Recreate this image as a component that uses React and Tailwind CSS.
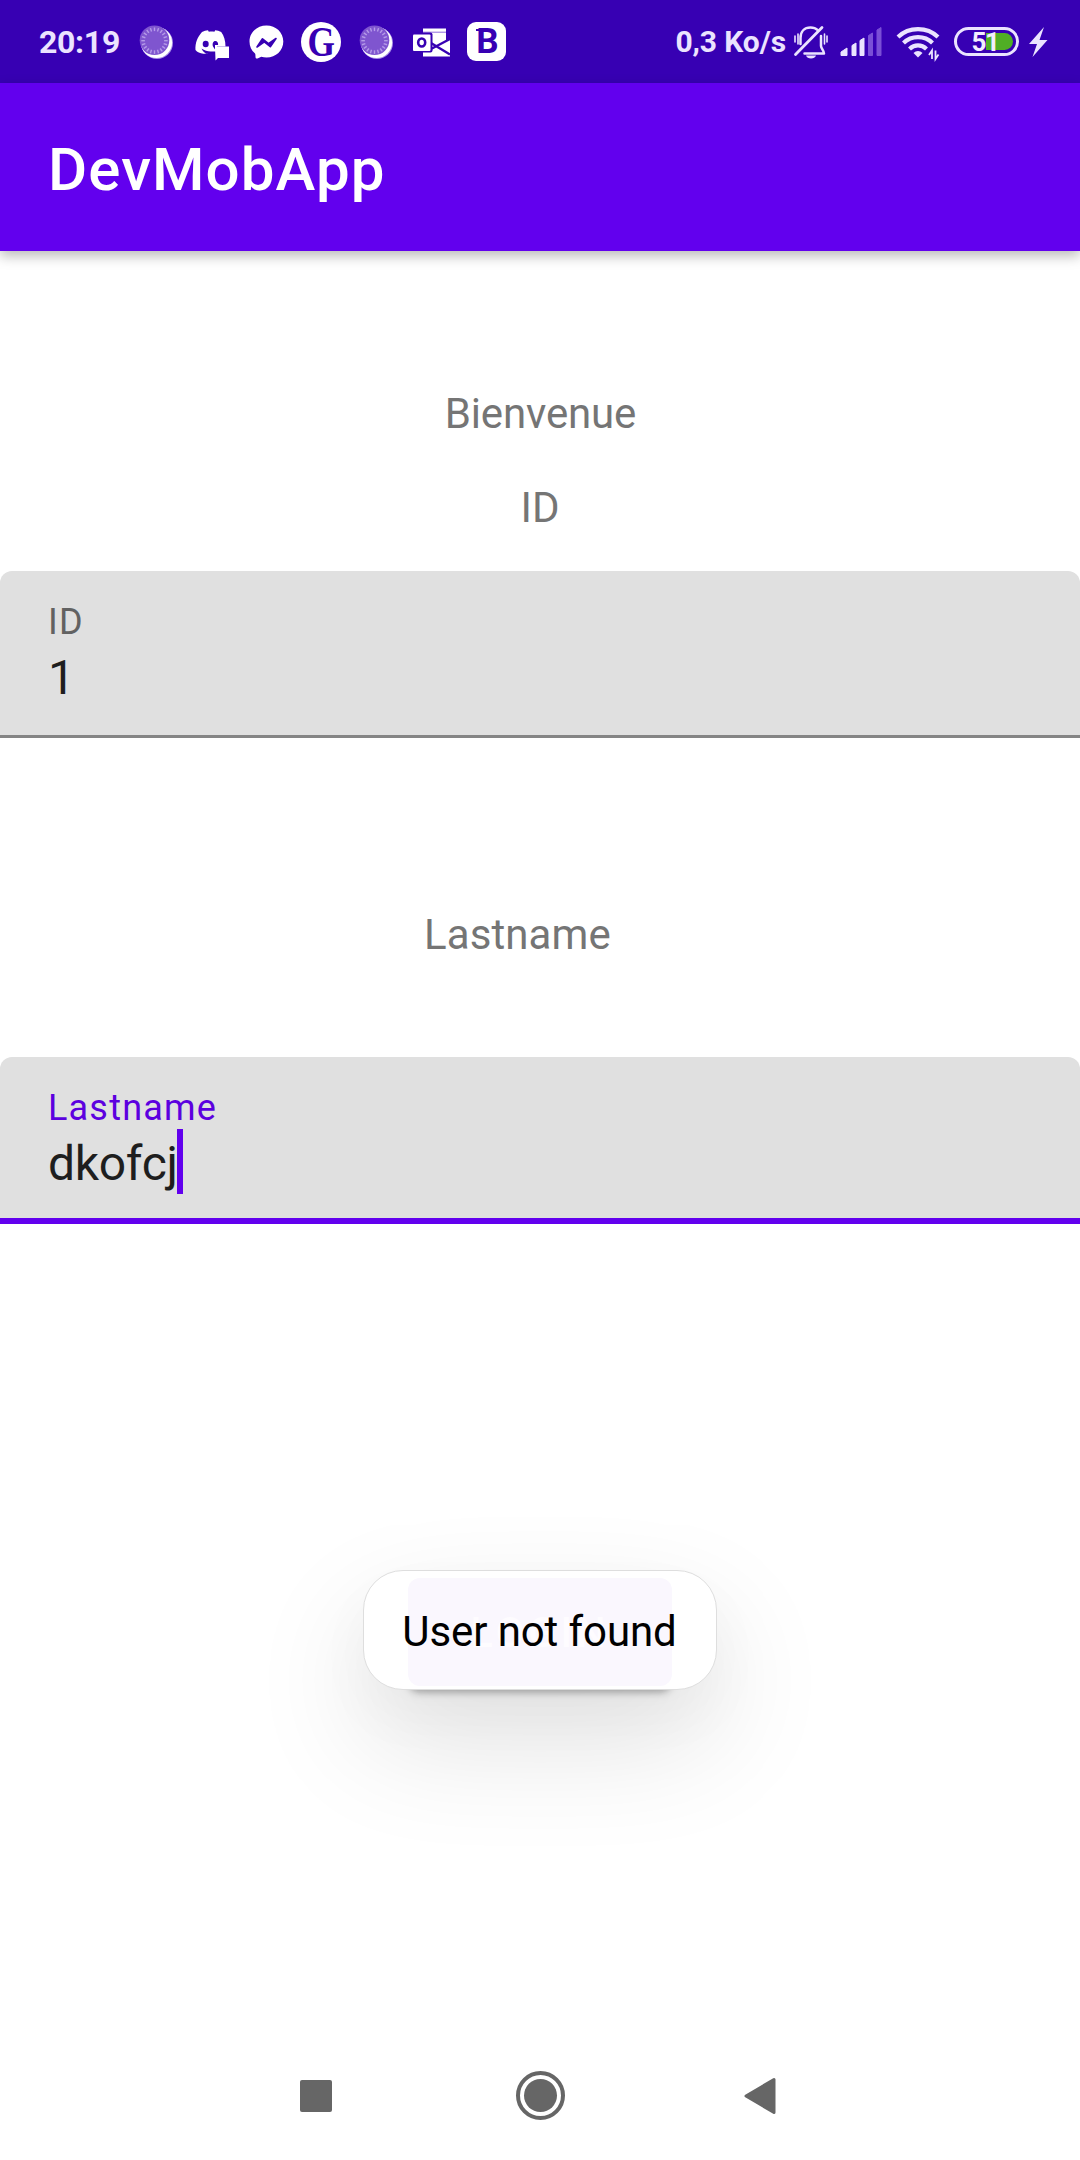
import React from "react";

const TINT = "#ebe3ff";

function Icon({ children, w = 40, h = 40, className = "" }) {
  return (
    <svg width={w} height={h} viewBox={`0 0 ${w} ${h}`} fill="none" className={`block shrink-0 ${className}`}>
      {children}
    </svg>
  );
}

function MoonIcon() {
  const rays = Array.from({ length: 20 }, (_, i) => i * 18);
  return (
    <Icon>
      <circle cx="21" cy="21" r="16" fill="#a68be6" />
      <circle cx="20.5" cy="20.5" r="15.6" fill="#fff" />
      <circle cx="18.5" cy="18.2" r="14.8" fill="#7f55cf" />
      {rays.map((a) => (
        <path key={a} d="M18.5 5.5v3.6" stroke="#b59be8" strokeWidth="1.4" transform={`rotate(${a} 18.5 18.7)`} />
      ))}
    </Icon>
  );
}

function DiscordIcon() {
  return (
    <Icon>
      <path
        d="M11 10c2-1 4-1.500 6-1.700l.8 1.400c2-.3 3.600-.3 5.600 0l.8-1.400c2 .2 4 .7 6 1.700 2.800 4 4.300 8.600 4.300 14.500H26v7.500c-1.500.2-8 .2-9.500-.1L15 30l-1.500-.5c2.500 2 3.500 1.800-1.200 2.300C9 31.500 6.200 30 4.500 28c-.5-7 2-13 6.500-18Z"
        fill="#fff"
      />
      <path d="M10.500 26.500c3 2 6 3 9 3H25V35H15l1.500-3.200c-2.500-.6-4.500-2-6-5.300Z" fill="#3700b3" />
      <ellipse cx="14.700" cy="22" rx="3" ry="3.200" fill="#3700b3" />
      <path d="M22 24.500c-1-3 .2-5.600 2.300-5.600 2 0 3.100 2 2.800 4.100H24v4.500Z" fill="#3700b3" />
      <path d="M24 24.500h14V36H27l-2.500 2.500Z" fill="#fff" />
    </Icon>
  );
}

function MessengerIcon() {
  return (
    <Icon>
      <path
        d="M20.500 3.500C11 3.500 3.500 10.300 3.500 19.500c0 4.800 2 9 5.300 11.800.6.500.6 1 .7 3.700.1 1.400 1 1.800 2 1.400l3.800-1.700c1.600.5 3.300.8 5.200.8 9.500 0 16.800-6.900 16.800-16S30 3.500 20.500 3.500Z"
        fill="#fff"
      />
      <path d="m11 25 5.500-8.200 6 4.900 7.500-5.200-5.700 8.200-6-4.900Z" fill="#3700b3" stroke="#3700b3" strokeWidth="1.600" strokeLinejoin="round" />
    </Icon>
  );
}

function GuardianIcon() {
  return (
    <div className="flex h-10 w-10 shrink-0 items-center justify-center rounded-full bg-white">
      <span className="block origin-center scale-x-[0.84] font-['Liberation_Serif',serif] text-[42px] leading-[40px] font-bold text-[#3700b3]">
        G
      </span>
    </div>
  );
}

function OutlookIcon() {
  return (
    <Icon>
      <path d="M12 6.500h23v13L39 17.500v17H12Z" fill="#fff" />
      <path d="M12 10.200h23" stroke="#8f6bdb" strokeWidth="1" />
      <path d="M20 21 39 32.500M39 17 20 27" stroke="#3700b3" strokeWidth="2.400" />
      <path d="M35 5v13l5-2.500V5Z" fill="#3700b3" />
      <rect x="1" y="10.500" width="20.500" height="20" rx="2" fill="#3700b3" />
      <rect x="2" y="12.500" width="17.500" height="16.500" rx="1" fill="#fff" />
      <ellipse cx="10.700" cy="20.500" rx="3.500" ry="4" stroke="#3700b3" strokeWidth="2.600" />
    </Icon>
  );
}

function BookingIcon() {
  return (
    <div className="relative ml-px flex h-[39px] w-[39px] shrink-0 items-center justify-center rounded-[9px] bg-white">
      <span className="absolute top-[7px] left-[9px] h-[2px] w-[4px] bg-[#3700b3]" />
      <span className="ml-[2px] text-[35px] leading-[39px] font-bold text-[#3700b3]">B</span>
    </div>
  );
}

function MutedBellIcon() {
  return (
    <Icon w={36} h={40}>
      <g stroke={TINT} strokeWidth="2.500" strokeLinecap="round">
        <path d="M7.500 22V16C7.500 9.500 11.500 5.500 17.500 5.500c3 0 5.500 1 7.300 2.700M28 14v10c0 2.500 3 4.500 3 7.500H11.500" strokeLinejoin="round" />
        <path d="M2.500 32.500 29 5.500" strokeWidth="2.800" />
        <path d="M2 14v6M34 14v6M5 12v10M31.500 12v10" strokeWidth="1.600" />
      </g>
      <path d="M13 33.500h10c-1 4-9 4-10 0Z" fill={TINT} />
    </Icon>
  );
}

function SignalIcon() {
  return (
    <Icon w={42} h={40} className="ml-[11px]">
      <path d="M1 33.500v-3.500l6-4v7.500ZM12 33.500V23.500l4-2.500v12.500ZM20 33.500V18.500l4-2.500v17.500Z" fill={TINT} stroke={TINT} strokeLinejoin="round" />
      <path d="M28.500 33.500V13.500l4-2.500v22.500ZM37 33.500V8l4-2.500v28Z" fill="#7a4fd6" stroke="#7a4fd6" strokeLinejoin="round" />
    </Icon>
  );
}

function WifiIcon() {
  return (
    <Icon w={44} h={40} className="ml-[14px]">
      <g stroke={TINT} strokeWidth="4.200">
        <path d="M2 15c11-10.500 29-10.500 40 0" />
        <path d="M7.500 21c8-7.800 21-7.800 29 0" />
        <path d="M13.500 27c5-4.800 12-4.800 17 0" />
      </g>
      <path d="M17.500 31c2.500-2.700 6.500-2.700 9 0L22 35.500Z" fill={TINT} />
      <path d="M36 37V28.500l-3 4.500M39.500 28.500V37l3-4.500" stroke={TINT} strokeWidth="1.800" />
    </Icon>
  );
}

function Battery() {
  return (
    <div className="relative ml-[14px] h-[29px] w-[65px] shrink-0 overflow-hidden rounded-full border-[3px] border-[#ebe3ff] p-[3px]">
      <div className="ml-auto h-full w-[27px] rounded-r-full bg-[#50ae25]" />
      <span className="absolute inset-0 flex items-center justify-center pr-[3px] text-[26px] leading-none font-bold tracking-[-1.5px] text-[#f3edff]">
        51
      </span>
    </div>
  );
}

function StatusBar() {
  return (
    <div className="flex h-[83px] items-center justify-between bg-[#3700b3] pr-[32px] pl-[39px]">
      <div className="flex items-center">
        <span className="w-[97px] text-[32px] leading-[40px] font-bold tracking-[-0.3px] text-[#ebe3ff]">20:19</span>
        <div className="flex items-center gap-[15px]">
          <MoonIcon />
          <DiscordIcon />
          <MessengerIcon />
          <GuardianIcon />
          <MoonIcon />
          <OutlookIcon />
          <BookingIcon />
        </div>
      </div>
      <div className="flex items-center">
        <span className="mr-[7px] text-[30px] leading-[40px] font-bold tracking-[-0.1px] whitespace-nowrap text-[#ebe3ff]">
          0,3 Ko/s
        </span>
        <MutedBellIcon />
        <SignalIcon />
        <WifiIcon />
        <Battery />
        <Icon w={20} h={32} className="ml-[9px]">
          <path d="M16 1 1 18h8L4.500 31 19.500 14h-8Z" fill={TINT} />
        </Icon>
      </div>
    </div>
  );
}

function Field({ label, value, focused }) {
  return (
    <div
      className={`h-[167px] rounded-t-[12px] bg-[#e0e0e0] px-12 pt-[29px] ${
        focused ? "border-b-6 border-[#6200ee]" : "border-b-3 border-[#858585]"
      }`}
    >
      <div className={`text-[36px] leading-[44px] tracking-[1.2px] ${focused ? "text-[#5c00df]" : "text-[#626262]"}`}>
        {label}
      </div>
      <div className="mt-[6px] flex items-start text-[48px] leading-[56px] text-[#1e1e1e]">
        <span className="tracking-[-0.3px]">{value}</span>
        {focused && <span className="-mt-[7px] -ml-px h-[65px] w-[6px] bg-[#6200ee]" />}
      </div>
    </div>
  );
}

function Toast() {
  return (
    <div className="relative isolate mx-auto h-[120px] w-[354px]">
      <div className="absolute top-[8px] left-[45px] -z-10 h-[108px] w-[264px] rounded-[12px] shadow-[0_6px_8px_rgba(0,0,0,0.35)]" />
      <div className="flex h-full w-full items-center justify-center rounded-[40px] border border-[#dedede] bg-white pt-[3px] shadow-[0_50px_120px_rgba(0,0,0,0.12),0_26px_60px_rgba(0,0,0,0.03)]">
        <div className="relative flex h-[108px] w-[264px] items-center justify-center rounded-[12px] bg-[#faf7fe]">
          <span className="pt-[2px] text-[42px] leading-[56px] font-medium tracking-[3.75px] text-[#fefcff]">LOGIN</span>
          <span className="absolute inset-0 flex items-center justify-center pr-px text-[42px] leading-[56px] tracking-[-0.1px] whitespace-nowrap text-black">
            User not found
          </span>
        </div>
      </div>
    </div>
  );
}

function NavBar() {
  return (
    <div className="mt-auto mb-[40px] flex h-[49px] items-center">
      <div className="ml-[300px] h-[32px] w-[32px] rounded-[2px] bg-[#666666]" />
      <div className="ml-[184px] flex h-[49px] w-[49px] items-center justify-center rounded-full border-4 border-[#666666]">
        <div className="h-[33px] w-[33px] rounded-full bg-[#666666]" />
      </div>
      <Icon w={32} h={38} className="ml-[179px]">
        <path d="M2 19 30 2.500v33Z" fill="#666666" stroke="#666666" strokeWidth="3" strokeLinejoin="round" />
      </Icon>
    </div>
  );
}

export default function App() {
  return (
    <div className="flex h-[2160px] w-[1080px] flex-col overflow-hidden bg-white font-[Roboto,sans-serif]">
      <StatusBar />
      <header className="h-[168px] shrink-0 bg-[#6200ee] px-12 pt-[47px] shadow-[0_5px_12px_rgba(0,0,0,0.27)]">
        <h1 className="text-[60px] leading-[80px] font-medium tracking-[1.1px] text-white">DevMobApp</h1>
      </header>
      <p className="mt-[135px] pl-px text-center text-[42px] leading-[56px] tracking-[-0.15px] text-[#757575]">Bienvenue</p>
      <p className="mt-[38px] mb-[35px] text-center text-[42px] leading-[56px] text-[#757575]">ID</p>
      <Field label="ID" value="1" />
      <p className="mt-[169px] mb-[94px] pl-[424px] text-[42px] leading-[56px] tracking-[0.1px] text-[#757575]">Lastname</p>
      <Field label="Lastname" value="dkofcj" focused />
      <div className="mt-[346px]">
        <Toast />
      </div>
      <NavBar />
    </div>
  );
}
